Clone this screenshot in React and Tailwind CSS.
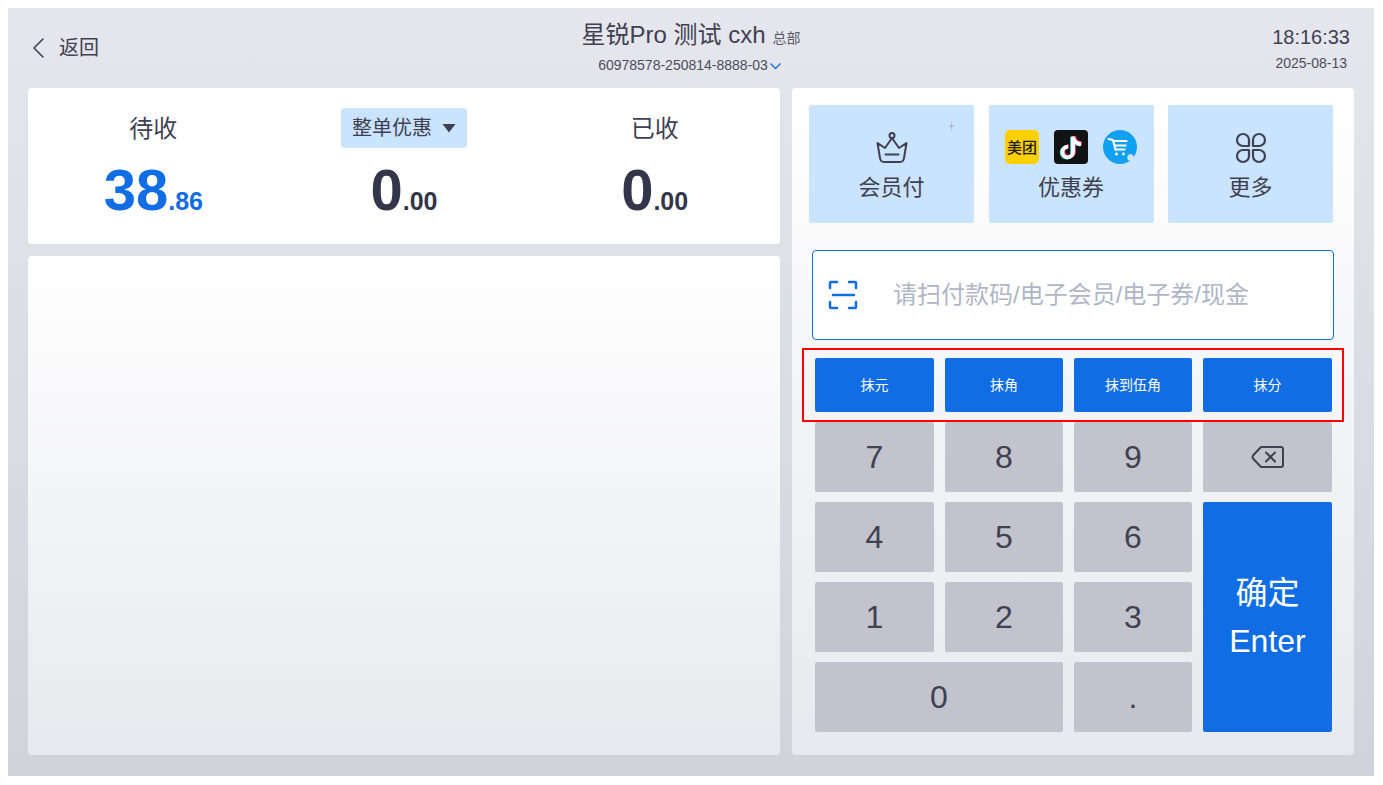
import React from "react";

const keyClass =
  "flex items-center justify-center rounded-[2px] bg-[#c3c3cd] text-[32px] text-[#3f4152]";
const cutClass =
  "flex items-center justify-center rounded-[2px] bg-[#116de3] text-[14px] text-white";

const CrownIcon = () => (
  <svg width="32" height="32" viewBox="0 0 32 32" fill="none" stroke="#3f4152" strokeWidth="2" strokeLinejoin="round" strokeLinecap="round">
    <circle cx="16" cy="3.5" r="2.5" />
    <path d="M1.5 11 L9 16 L16 6 L23 16 L30.5 11 L28 26 Q27.5 30 24 30 H8 Q4.5 30 4 26 Z" />
    <path d="M9.5 22.5 H22.5" />
  </svg>
);

const MoreIcon = () => (
  <svg width="32" height="32" viewBox="0 0 32 32" fill="none" stroke="#3f4152" strokeWidth="2.2" strokeLinejoin="round">
    <path d="M8 2 A6 6 0 0 1 14 8 V14 H8 A6 6 0 0 1 8 2 Z" />
    <path d="M24 2 A6 6 0 0 0 18 8 V14 H24 A6 6 0 0 0 24 2 Z" />
    <path d="M8 30 A6 6 0 0 0 14 24 V18 H8 A6 6 0 0 0 8 30 Z" />
    <path d="M24 30 A6 6 0 0 1 18 24 V18 H24 A6 6 0 0 1 24 30 Z" />
  </svg>
);

const notePath =
  "M11 1.5 H15 Q15.5 6.5 21 7 V11 Q17.5 11 15 9.2 V17 A7.2 7.2 0 1 1 8 9.8 V13.8 A3.3 3.3 0 1 0 11 17 Z";

const TiktokIcon = () => (
  <div className="flex h-[34px] w-[34px] items-center justify-center rounded-[4px] bg-[#101213]">
    <svg width="24" height="27" viewBox="0 0 24 27">
      <path d={notePath} fill="#25f4ee" transform="translate(0.2,1.4)" />
      <path d={notePath} fill="#fe2c55" transform="translate(2,0.4)" />
      <path d={notePath} fill="#ffffff" transform="translate(1,1)" />
    </svg>
  </div>
);

const CartIcon = () => (
  <svg width="34" height="34" viewBox="0 0 34 34">
    <circle cx="17" cy="17" r="17" fill="#12a0f0" />
    <path d="M5.5 9 L10 10 L12.5 20" fill="none" stroke="#fff" strokeWidth="2" strokeLinecap="round" strokeLinejoin="round" />
    <path d="M10 11 H23.5 M12 15.5 H22.5 M13 19.5 H21.5" fill="none" stroke="#fff" strokeWidth="2.2" strokeLinecap="round" />
    <circle cx="13.5" cy="24" r="1.4" fill="#fff" />
    <circle cx="20.5" cy="24" r="1.4" fill="#fff" />
    <circle cx="27.5" cy="27.5" r="3.2" fill="#cfe4fa" />
  </svg>
);

const ScanIcon = () => (
  <svg width="30" height="30" viewBox="0 0 30 30" fill="none" stroke="#116de3" strokeWidth="2.5" strokeLinecap="round" strokeLinejoin="round">
    <path d="M9 2 H3 Q2 2 2 3 V8" />
    <path d="M21 2 H27 Q28 2 28 3 V8" />
    <path d="M2 22 V27 Q2 28 3 28 H9" />
    <path d="M28 22 V27 Q28 28 27 28 H21" />
    <path d="M5 15 H26" />
  </svg>
);

const BackspaceIcon = () => (
  <svg width="34" height="24" viewBox="0 0 34 24" fill="none" stroke="#3f4152" strokeWidth="2" strokeLinejoin="round" strokeLinecap="round">
    <path d="M10 2 H30 Q32 2 32 4 V20 Q32 22 30 22 H10 L2 13.5 Q1 12 2 10.5 Z" />
    <path d="M15 7.5 L24 16.5 M24 7.5 L15 16.5" />
  </svg>
);

const Amount = ({ main, cents, color }) => (
  <div className={`mt-[12px] flex items-baseline justify-center font-bold leading-[60px] ${color}`}>
    <span className="text-[58px]">{main}</span>
    <span className="text-[25px]">{cents}</span>
  </div>
);

const App = () => {
  return (
    <div className="min-h-screen bg-white p-2 text-[#3f4152]">
      <div className="flex h-[768px] w-[1366px] flex-col bg-gradient-to-b from-[#e6e7ed] to-[#d0d3da] px-5 font-['Liberation_Sans','Noto_Sans_CJK_SC',sans-serif]">
        {/* header */}
        <div className="flex h-[80px] shrink-0 items-start justify-between">
          <div className="flex w-[200px] items-center pl-[3px] pt-[26px]">
            <svg width="14" height="22" viewBox="0 0 14 22" fill="none" stroke="#3f4152" strokeWidth="1.6" strokeLinecap="round" strokeLinejoin="round">
              <path d="M12 2 L3 11 L12 20" />
            </svg>
            <span className="ml-[14px] text-[20px] leading-[28px]">返回</span>
          </div>
          <div className="flex flex-col items-center pt-[12px]">
            <div className="flex items-baseline">
              <span className="text-[24px] leading-[30px]">星锐Pro 测试 cxh</span>
              <span className="ml-[7px] text-[14px] leading-[18px] text-[#585a6b]">总部</span>
            </div>
            <div className="mt-[5px] flex items-center pr-[2px] text-[14px] leading-[20px] text-[#4b4d5e]">
              60978578-250814-8888-03
              <svg className="ml-[1px] mt-[1px]" width="13" height="8" viewBox="0 0 13 8" fill="none" stroke="#116de3" strokeWidth="1.3">
                <path d="M1.5 1.5 L6.5 6.5 L11.5 1.5" />
              </svg>
            </div>
          </div>
          <div className="flex w-[200px] flex-col items-end pr-[4px] pt-[16px]">
            <span className="text-[20px] leading-[26px]">18:16:33</span>
            <span className="mr-[3px] mt-[3px] text-[14px] leading-[20px] text-[#4b4d5e]">2025-08-13</span>
          </div>
        </div>

        {/* body */}
        <div className="flex gap-3">
          <div className="flex w-[752px] flex-col gap-3">
            <div className="grid h-[156px] grid-cols-3 rounded-[4px] bg-white">
              <div className="flex flex-col items-center pt-[21px]">
                <div className="flex h-[39px] items-center text-[24px]">待收</div>
                <Amount main="38" cents=".86" color="text-[#116de3]" />
              </div>
              <div className="flex flex-col items-center pt-[20px]">
                <div className="flex h-[40px] w-[126px] items-center justify-center rounded-[4px] bg-[#cbe4fd] text-[20px]">
                  整单优惠
                  <svg className="ml-[10px]" width="14" height="10" viewBox="0 0 14 10" fill="#3f4152">
                    <path d="M0.5 1 H13.5 L7 9.5 Z" />
                  </svg>
                </div>
                <Amount main="0" cents=".00" color="text-[#333648]" />
              </div>
              <div className="flex flex-col items-center pt-[21px]">
                <div className="flex h-[39px] items-center text-[24px]">已收</div>
                <Amount main="0" cents=".00" color="text-[#333648]" />
              </div>
            </div>
            <div className="h-[499px] rounded-[4px] bg-gradient-to-b from-white to-[#e8e9ee]"></div>
          </div>

          {/* right panel */}
          <div className="flex h-[667px] w-[562px] flex-col rounded-[4px] bg-gradient-to-b from-white to-[#e8e9ee] px-[10px] pt-[17px]">
            <div className="flex gap-[14.5px] pl-[7px]">
              <div className="relative flex h-[118px] w-[165px] flex-col items-center rounded-[2px] bg-[#cbe4fd] pt-[27px]">
                <CrownIcon />
                <span className="mt-[9px] text-[22px] leading-[30px]">会员付</span>
                <svg className="absolute right-[19px] top-[14px]" width="7" height="14" viewBox="0 0 7 14">
                  <path d="M3.5 1 L4 6 L6.5 7 L4 8 L3.5 13 L3 8 L0.5 7 L3 6 Z" fill="#a9b3c2" />
                </svg>
              </div>
              <div className="flex h-[118px] w-[165px] flex-col items-center rounded-[2px] bg-[#cbe4fd] pt-[25px]">
                <div className="flex h-[34px] items-center gap-[15px]">
                  <div className="flex h-[34px] w-[34px] items-center justify-center rounded-[5px] bg-[#ffd000] text-[15px] font-medium leading-none text-[#1c1c1c]">
                    美团
                  </div>
                  <TiktokIcon />
                  <CartIcon />
                </div>
                <span className="mt-[9px] text-[22px] leading-[30px]">优惠券</span>
              </div>
              <div className="flex h-[118px] w-[165px] flex-col items-center rounded-[2px] bg-[#cbe4fd] pt-[27px]">
                <MoreIcon />
                <span className="mt-[9px] text-[22px] leading-[30px]">更多</span>
              </div>
            </div>

            <div className="ml-[10px] mt-[27px] flex h-[90px] w-[522px] items-center rounded-[4px] border border-[#116de3] bg-white pl-[15px]">
              <ScanIcon />
              <span className="ml-[35px] text-[24px] text-[#afb6c7]">请扫付款码/电子会员/电子券/现金</span>
            </div>

            <div className="mt-2 grid h-[74px] w-[542px] grid-cols-[119px_118px_118px_129px] items-center gap-x-[11px] border-2 border-[#ff0000] pl-[11px]">
              <div className={`${cutClass} h-[54px]`}>抹元</div>
              <div className={`${cutClass} h-[54px]`}>抹角</div>
              <div className={`${cutClass} h-[54px]`}>抹到伍角</div>
              <div className={`${cutClass} h-[54px]`}>抹分</div>
            </div>

            <div className="ml-[13px] grid w-[517px] grid-cols-[119px_118px_118px_129px] grid-rows-[70px_70px_70px_70px] gap-x-[11px] gap-y-[10px]">
              <div className={keyClass}>7</div>
              <div className={keyClass}>8</div>
              <div className={keyClass}>9</div>
              <div className={keyClass}>
                <BackspaceIcon />
              </div>
              <div className={keyClass}>4</div>
              <div className={keyClass}>5</div>
              <div className={keyClass}>6</div>
              <div className="row-span-3 flex flex-col items-center justify-center rounded-[2px] bg-[#116de3] text-[32px] leading-[48px] text-white">
                <span>确定</span>
                <span>Enter</span>
              </div>
              <div className={keyClass}>1</div>
              <div className={keyClass}>2</div>
              <div className={keyClass}>3</div>
              <div className={`${keyClass} col-span-2`}>0</div>
              <div className={keyClass}>.</div>
            </div>
          </div>
        </div>
      </div>
    </div>
  );
};

export default App;
